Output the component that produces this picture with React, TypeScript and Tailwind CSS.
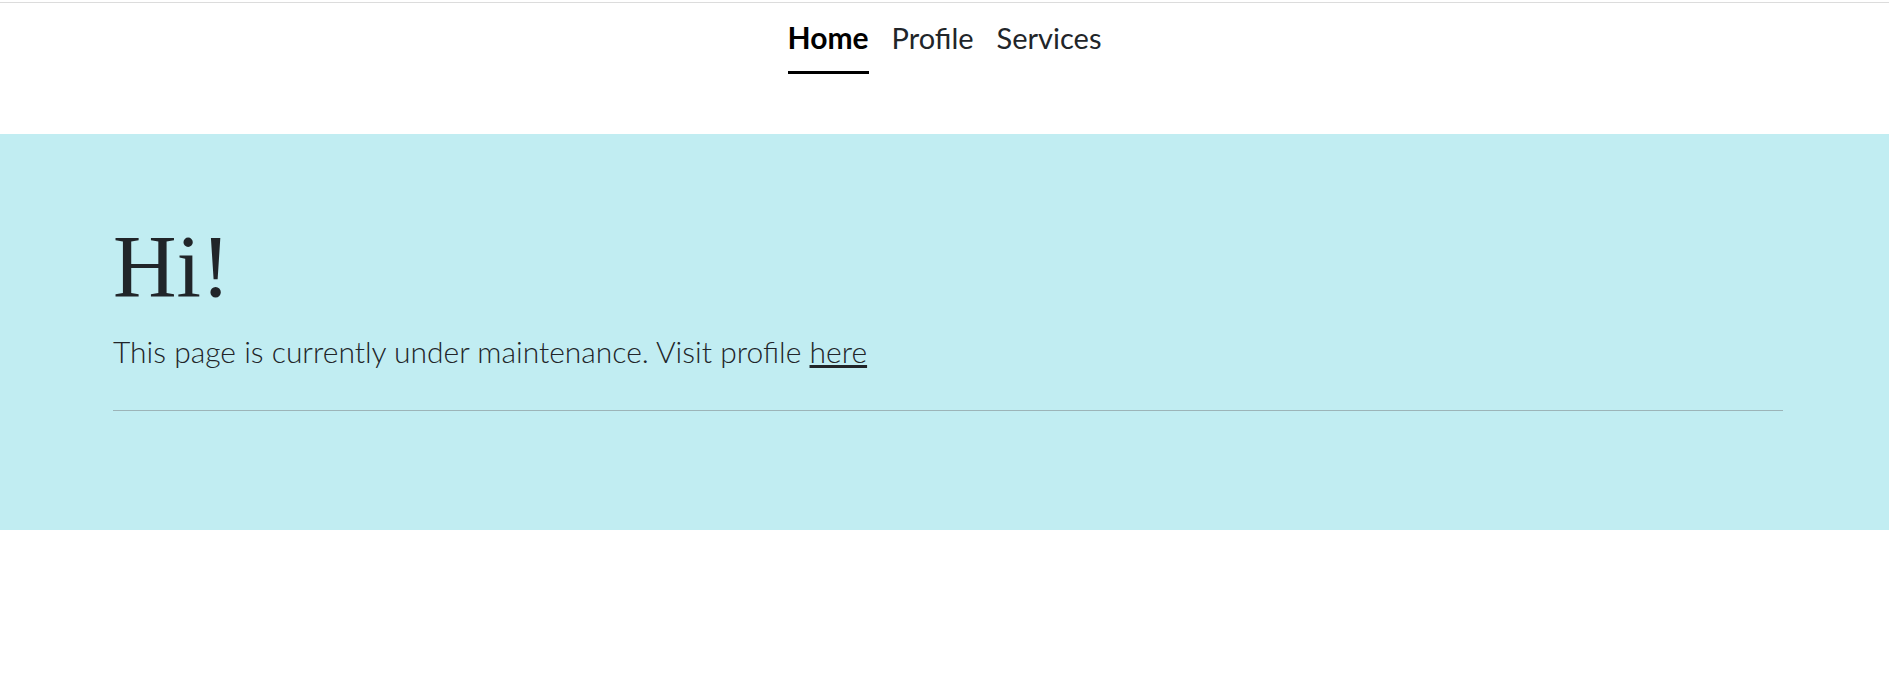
const App = () => {
    return (
        <div className="min-h-screen bg-white pt-[2px] font-['Lato',sans-serif]">
            <div className="h-px bg-[#dcdcdc]" />
            <nav className="flex justify-center items-start gap-[23px] pt-[12px] text-[30px] leading-[45px]">
                <a href="#" className="font-bold text-black border-b-[3px] border-black pb-[11px]">Home</a>
                <a href="#" className="text-[29px] text-[#212529]">Profile</a>
                <a href="#" className="text-[29px] text-[#212529]">Services</a>
            </nav>
            <section className="mt-[60px] bg-[#c1edf2] pt-[80px] pb-[119px] text-[#212529]">
                <div className="ml-[113px] mr-[106px]">
                    <h1 className="font-['Liberation_Serif',serif] text-[88px] leading-[1.2]">Hi!</h1>
                    <p className="mt-[9px] text-[30px] font-light leading-[45px]">
                        This page is currently under maintenance. Visit profile <a href="#" className="underline">here</a>
                    </p>
                    <hr className="mt-[36px] border-t border-[#9cb4b8]" />
                </div>
            </section>
        </div>
    )
}

export default App
